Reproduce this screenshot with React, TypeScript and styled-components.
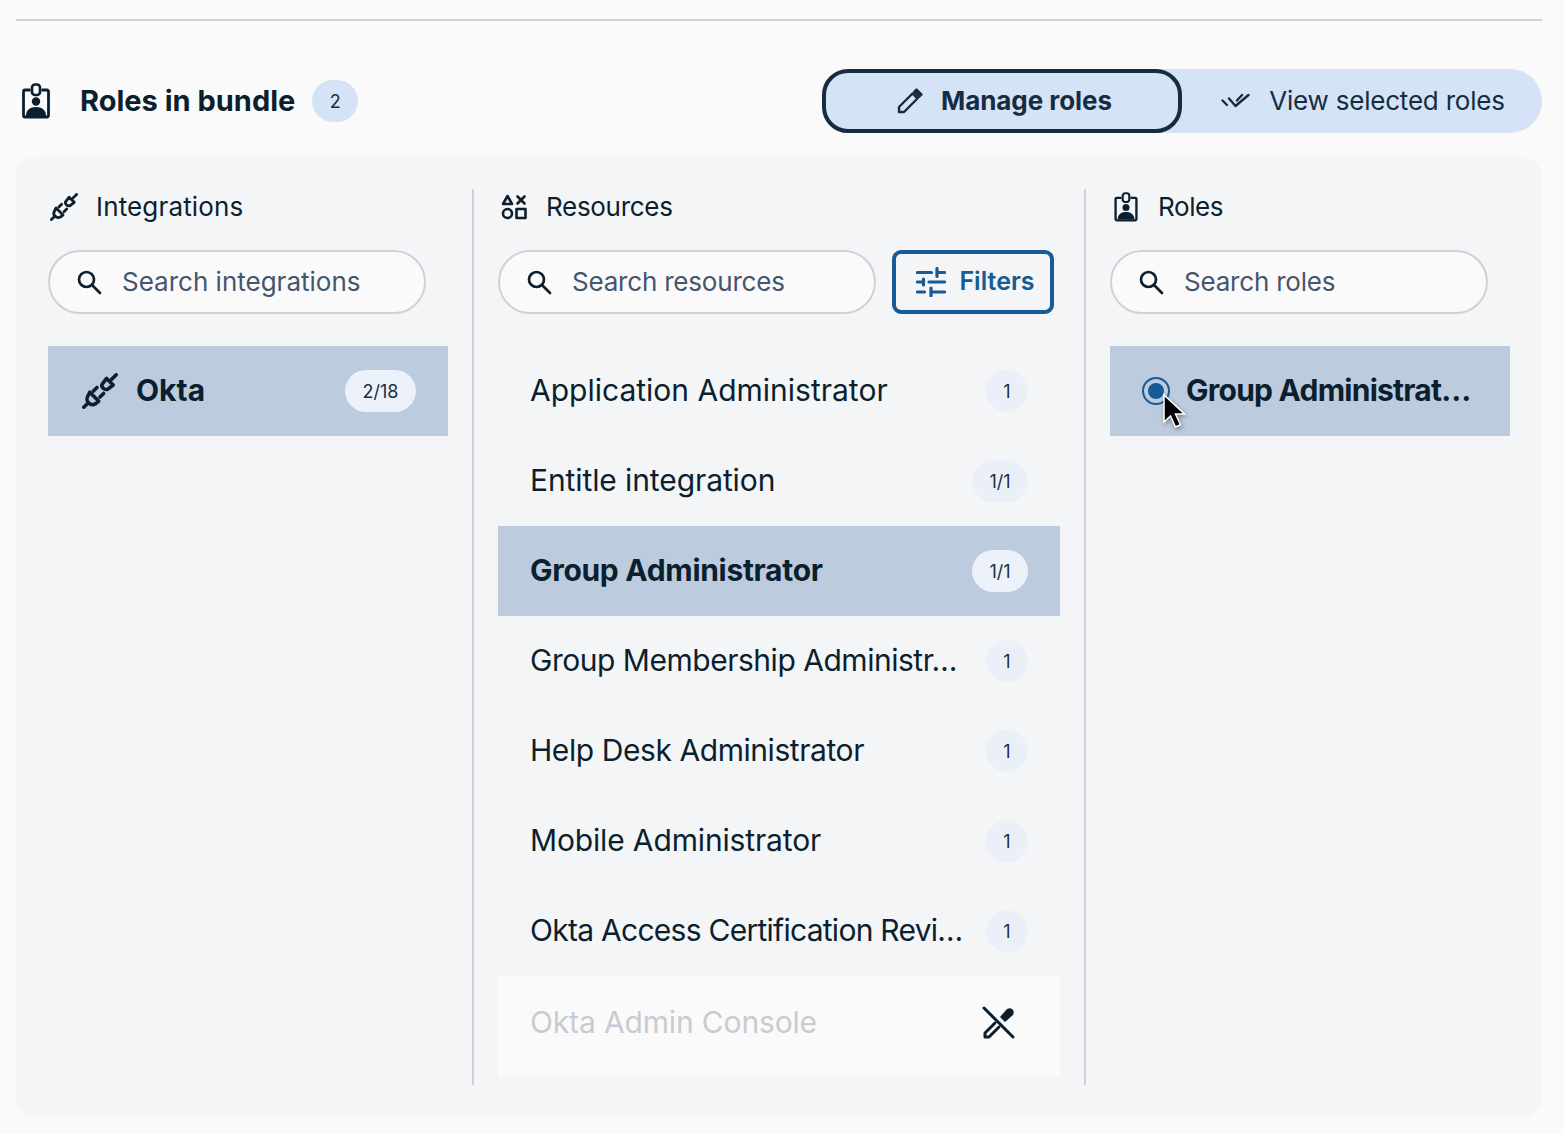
import React from 'react'
import styled, { createGlobalStyle } from 'styled-components'

const GlobalStyle = createGlobalStyle`
  html, body {
    margin: 0;
    padding: 0;
    background: #fafafa;
    font-family: 'Inter', 'Liberation Sans', sans-serif;
    color: #0b1f2e;
  }
`

const Page = styled.div`
  width: 1526px;
  margin-left: 16px;
  padding-top: 19px;
`

const TopRule = styled.div`
  height: 2px;
  background: #d0d0d8;
`

const Header = styled.div`
  display: flex;
  align-items: center;
  justify-content: space-between;
  margin-top: 48px;
  height: 64px;
`

const TitleGroup = styled.div`
  display: flex;
  align-items: center;
`

const TitleIcon = styled.span`
  display: flex;
  box-sizing: border-box;
  width: 64px;
  padding-left: 6px;
`

const Title = styled.h2`
  margin: 0;
  padding-bottom: 2px;
  font-size: 29px;
  font-weight: 700;
`

const CountBadge = styled.span`
  display: flex;
  align-items: center;
  justify-content: center;
  width: 46px;
  height: 42px;
  margin-left: 17px;
  border-radius: 21px;
  background: #d5e3f6;
  font-size: 18px;
  color: #1a2e42;
`

const Toggle = styled.div`
  display: flex;
  width: 720px;
  height: 64px;
  border-radius: 32px;
  background: #d5e3f6;
`

const ToggleButton = styled.button<{ $active?: boolean }>`
  display: flex;
  align-items: center;
  justify-content: center;
  gap: 18px;
  width: 360px;
  height: 64px;
  box-sizing: border-box;
  border: 4px solid ${({ $active }) => ($active ? '#152c42' : 'transparent')};
  border-radius: 26px;
  background: transparent;
  font-family: inherit;
  font-size: 26px;
  font-weight: ${({ $active }) => ($active ? 700 : 400)};
  letter-spacing: ${({ $active }) => ($active ? '-0.05px' : '-0.2px')};
  color: #152c42;
  padding: 0 0 0 ${({ $active }) => ($active ? '5px' : '2px')};
`

const ButtonText = styled.span`
  padding-bottom: 2px;
`

const Panel = styled.div`
  display: flex;
  margin-top: 24px;
  height: 960px;
  box-sizing: border-box;
  padding: 32px;
  border-radius: 20px;
  background: #f4f5f7;
`

const Column = styled.div<{ $width: number }>`
  width: ${({ $width }) => $width}px;
  flex: none;
`

const Divider = styled.div`
  flex: none;
  width: 2px;
  margin: 0 24px;
  background: #d0d0d8;
`

const ColumnHeading = styled.div`
  display: flex;
  align-items: center;
  height: 36px;
  font-size: 26px;
  font-weight: 400;
`

const HeadingText = styled.span<{ $tracking?: number }>`
  padding-bottom: 2px;
  letter-spacing: ${({ $tracking }) => $tracking ?? 0}px;
`

const HeadingIcon = styled.span<{ $inset: number }>`
  display: flex;
  box-sizing: border-box;
  width: 48px;
  padding-left: ${({ $inset }) => $inset}px;
`

const SearchRow = styled.div`
  display: flex;
  gap: 16px;
  margin-top: 25px;
`

const SearchBox = styled.div`
  display: flex;
  align-items: center;
  gap: 20px;
  width: 378px;
  height: 64px;
  box-sizing: border-box;
  padding-left: 26px;
  border: 2px solid #d0d0d8;
  border-radius: 32px;
  background: #fafafa;
  font-size: 26px;
  color: #45566c;
`

const SearchText = styled.span<{ $tracking?: number }>`
  padding-bottom: 2px;
  letter-spacing: ${({ $tracking }) => $tracking ?? 0}px;
`

const FiltersButton = styled.button`
  display: flex;
  align-items: center;
  justify-content: center;
  gap: 13px;
  width: 162px;
  height: 64px;
  box-sizing: border-box;
  border: 4px solid #175a94;
  border-radius: 9px;
  background: transparent;
  font-family: inherit;
  font-size: 25px;
  font-weight: 600;
  color: #175a94;
  padding: 0 0 0 5px;
`

const List = styled.div`
  margin-top: 32px;
`

const Row = styled.div<{ $selected?: boolean }>`
  display: flex;
  align-items: center;
  justify-content: space-between;
  height: 90px;
  box-sizing: border-box;
  padding: 0 32px;
  background: ${({ $selected }) => ($selected ? '#bccbdd' : 'transparent')};
  font-size: 30px;
  font-weight: ${({ $selected }) => ($selected ? 700 : 400)};
  letter-spacing: ${({ $selected }) => ($selected ? '-0.3px' : '0')};
`

const RowLabel = styled.span<{ $tracking?: number }>`
  padding-bottom: 2px;
  white-space: nowrap;
  letter-spacing: ${({ $tracking }) => $tracking ?? 0}px;
`

const DisabledRow = styled(Row)`
  height: 101px;
  padding-right: 44px;
  padding-bottom: 8px;
  background: #fafafa;
  color: #c8ccd2;
`

const Pill = styled.span<{ $selected?: boolean; $width: number }>`
  flex: none;
  display: flex;
  align-items: center;
  justify-content: center;
  width: ${({ $width }) => $width}px;
  height: 42px;
  border-radius: 21px;
  background: ${({ $selected }) => ($selected ? '#edf2fa' : '#ebf0f8')};
  font-size: 18px;
  font-weight: 400;
  letter-spacing: 0;
  color: #1a2e42;
`

const RowStart = styled.span`
  display: flex;
  align-items: center;
  gap: 18px;
  padding-left: 2px;
`

const RadioRow = styled(Row)`
  position: relative;
  justify-content: flex-start;
  gap: 16px;
`

const Radio = styled.span`
  flex: none;
  display: flex;
  align-items: center;
  justify-content: center;
  width: 28px;
  height: 28px;
  box-sizing: border-box;
  border: 2px solid #175a94;
  border-radius: 50%;
  &::after {
    content: '';
    width: 16px;
    height: 16px;
    border-radius: 50%;
    background: #175a94;
  }
`

const Cursor = styled.svg`
  position: absolute;
  left: 52px;
  top: 47px;
  filter: drop-shadow(1px 2px 2px rgba(0, 0, 0, 0.35));
`

const Plug = ({ size }: { size: number }) => (
  <svg width={size} height={size} viewBox="0 0 30 30" fill="none" stroke="#0b1f2e" strokeWidth="3" strokeLinecap="round" strokeLinejoin="round">
    <path d="M1.500 28.500 5.500 24.500" />
    <path d="M6.500 16 14 23.500 11.500 25.500c-2 1.200-4.500.9-6-.5s-1.800-4-.5-6z" />
    <path d="M9.500 15 12.500 12M15 20 18 17" />
    <path d="M17 9 20.500 4.500 26 10 21.500 13.500c-1.500.5-3 0-4-1s-1.200-2.500-.5-3.500z" />
    <path d="M24.500 5.500 28.500 1.500" />
  </svg>
)

const Badge = ({ width, height }: { width: number; height: number }) => (
  <svg width={width} height={height} viewBox="0 0 28 36" fill="none">
    <path d="M8.500 7H3a1.500 1.500 0 0 0-1.500 1.500v24A1.500 1.500 0 0 0 3 34h22a1.500 1.500 0 0 0 1.500-1.500v-24A1.500 1.500 0 0 0 25 7h-5.500" stroke="#0b1f2e" strokeWidth="2.800" />
    <rect x="10" y="1.500" width="8" height="10.500" rx="3" stroke="#0b1f2e" strokeWidth="2.600" />
    <circle cx="14" cy="18.500" r="4.200" fill="#0b1f2e" />
    <path d="M4 33c0-6 4-9 10-9s10 3 10 9z" fill="#0b1f2e" />
  </svg>
)

const Shapes = () => (
  <svg width="26" height="26" viewBox="0 0 26 26" fill="none" stroke="#0b1f2e" strokeWidth="2.600" strokeLinejoin="round" strokeLinecap="round">
    <path d="M6.500 2 11 10H2z" />
    <path d="M16.500 2.500 23.500 9.500M23.500 2.500 16.500 9.500" />
    <circle cx="6.500" cy="19.500" r="4.500" />
    <rect x="15.500" y="15" width="9" height="9" />
  </svg>
)

const SearchIcon = () => (
  <svg width="26" height="26" viewBox="0 0 26 26" fill="none" stroke="#0b1f2e" strokeWidth="2.700" strokeLinecap="round">
    <circle cx="10.500" cy="10.500" r="7.500" />
    <path d="M16 16 24 24" />
  </svg>
)

const Pencil = () => (
  <svg width="26" height="26" viewBox="0 0 26 26" fill="none" stroke="#152c42" strokeWidth="2.400" strokeLinejoin="round">
    <path d="M2 24v-5L15.500 5.500l5 5L7 24z" />
    <path d="M19.500 1.500 24.500 6.500 22 9l-5-5z" fill="#152c42" />
  </svg>
)

const DoubleCheck = () => (
  <svg width="30" height="20" viewBox="0 0 30 20" fill="none" stroke="#152c42" strokeWidth="2.400" strokeLinecap="round" strokeLinejoin="round">
    <path d="M1.500 9.500 6 14M8 7.500 14.500 15 27.500 4M16 9.500 21 4" />
  </svg>
)

const Sliders = () => (
  <svg width="30" height="30" viewBox="0 0 30 30" fill="none" stroke="#175a94" strokeWidth="3.200" strokeLinecap="round" strokeLinejoin="round">
    <path d="M1.500 5.500h14M21 1.500v8M21 5.500h7.500" />
    <path d="M1.500 15h6M7.500 12v6M13 15h15.500" />
    <path d="M1.500 25h7M15 21v8M15 25h13.500" />
  </svg>
)

const NoPencil = () => (
  <svg width="34" height="34" viewBox="0 0 34 34" fill="none" stroke="#0b1f2e" strokeWidth="3" strokeLinecap="round" strokeLinejoin="round">
    <path d="M2 2 31 31" />
    <path d="M13 17 3 27v4h4l10-10" />
    <path d="M18 11 25 3c2-1 4-1 5.500.5S32 7 31 9l-8 7z" fill="#0b1f2e" stroke="none" />
  </svg>
)

const resources = [
  { name: 'Application Administrator', count: '1', tracking: 0 },
  { name: 'Entitle integration', count: '1/1', tracking: -0.1 },
  { name: 'Group Administrator', count: '1/1', selected: true, tracking: -0.3 },
  { name: 'Group Membership Administr…', count: '1', tracking: -0.48 },
  { name: 'Help Desk Administrator', count: '1', tracking: -0.43 },
  { name: 'Mobile Administrator', count: '1', tracking: -0.15 },
  { name: 'Okta Access Certification Revi…', count: '1', tracking: -0.73 }
]

const App = () => {
  return (
    <Page>
      <GlobalStyle />
      <TopRule />
      <Header>
        <TitleGroup>
          <TitleIcon><Badge width={28} height={36} /></TitleIcon>
          <Title>Roles in bundle</Title>
          <CountBadge>2</CountBadge>
        </TitleGroup>
        <Toggle>
          <ToggleButton $active><Pencil /><ButtonText>Manage roles</ButtonText></ToggleButton>
          <ToggleButton><DoubleCheck /><ButtonText>View selected roles</ButtonText></ToggleButton>
        </Toggle>
      </Header>
      <Panel>
        <Column $width={400}>
          <ColumnHeading>
            <HeadingIcon $inset={2}><Plug size={28} /></HeadingIcon>
            <HeadingText $tracking={0.15}>Integrations</HeadingText>
          </ColumnHeading>
          <SearchRow>
            <SearchBox><SearchIcon /><SearchText>Search integrations</SearchText></SearchBox>
          </SearchRow>
          <List>
            <Row $selected>
              <RowStart><Plug size={36} /><RowLabel>Okta</RowLabel></RowStart>
              <Pill $selected $width={71}>2/18</Pill>
            </Row>
          </List>
        </Column>
        <Divider />
        <Column $width={562}>
          <ColumnHeading>
            <HeadingIcon $inset={3}><Shapes /></HeadingIcon>
            <HeadingText $tracking={-0.3}>Resources</HeadingText>
          </ColumnHeading>
          <SearchRow>
            <SearchBox><SearchIcon /><SearchText $tracking={-0.2}>Search resources</SearchText></SearchBox>
            <FiltersButton><Sliders /><ButtonText>Filters</ButtonText></FiltersButton>
          </SearchRow>
          <List>
            {resources.map((item) => (
              <Row key={item.name} $selected={item.selected}>
                <RowLabel $tracking={item.tracking}>{item.name}</RowLabel>
                <Pill $selected={item.selected} $width={item.count === '1' ? 42 : 56}>{item.count}</Pill>
              </Row>
            ))}
            <DisabledRow>
              <RowLabel $tracking={-0.15}>Okta Admin Console</RowLabel>
              <NoPencil />
            </DisabledRow>
          </List>
        </Column>
        <Divider />
        <Column $width={400}>
          <ColumnHeading>
            <HeadingIcon $inset={4}><Badge width={24} height={30} /></HeadingIcon>
            <HeadingText $tracking={-0.4}>Roles</HeadingText>
          </ColumnHeading>
          <SearchRow>
            <SearchBox><SearchIcon /><SearchText $tracking={-0.2}>Search roles</SearchText></SearchBox>
          </SearchRow>
          <List>
            <RadioRow $selected>
              <Radio />
              <RowLabel $tracking={-0.75}>Group Administrat…</RowLabel>
              <Cursor width="24" height="38" viewBox="0 0 24 38">
                <path d="M2 2v27l6.500-6 5 11 5-2.200-5-10.800h9z" fill="#000" stroke="#fff" strokeWidth="1.500" />
              </Cursor>
            </RadioRow>
          </List>
        </Column>
      </Panel>
    </Page>
  )
}

export default App
